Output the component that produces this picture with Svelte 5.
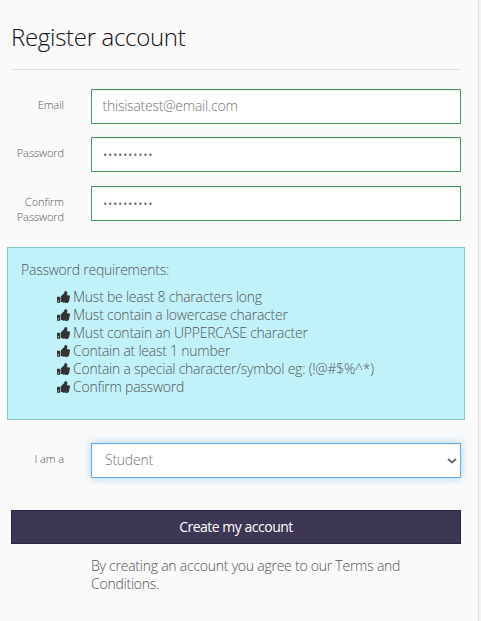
<script lang="ts">
	let email = $state('thisisatest@email.com');
	let password = $state('Passw0rd!1');
	let confirmPassword = $state('Passw0rd!1');
	let role = $state('Student');

	const requirements = [
		'Must be least 8 characters long',
		'Must contain a lowercase character',
		'Must contain an UPPERCASE character',
		'Contain at least 1 number',
		'Contain a special character/symbol eg: (!@#$%^*)',
		'Confirm password'
	];
</script>

<main class="panel">
	<h1>Register account</h1>
	<form onsubmit={(e) => e.preventDefault()}>
		<div class="form-group">
			<label for="email">Email</label>
			<input id="email" type="email" class="form-control valid" bind:value={email} />
		</div>
		<div class="form-group">
			<label for="password">Password</label>
			<input id="password" type="password" class="form-control valid" bind:value={password} />
		</div>
		<div class="form-group confirm">
			<label for="confirm">Confirm Password</label>
			<input id="confirm" type="password" class="form-control valid" bind:value={confirmPassword} />
		</div>

		<div class="requirements">
			<p>Password requirements:</p>
			<ul>
				{#each requirements as requirement}
					<li>
						<svg class="thumb" viewBox="0 0 13 12" aria-hidden="true">
							<path
								fill-rule="evenodd"
								d="M.5 5.800h2.200q.5 0 .5.5v4.900q0 .5-.5.5H.5q-.5 0-.5-.5V6.300q0-.5.5-.5zM.8 9.300v1.200h1V9.300z"
							/>
							<path
								d="M3.800 6q0-.5.4-.9L7 2.200C7.500 1.600 7.600.1 8.500.1c1.300 0 1.800.9 1.800 1.900 0 .8-.3 1.500-.5 2.200h1.900c.8 0 1.300.6 1.300 1.300 0 .5-.1.900-.4 1.200.2.6.1 1.200-.3 1.700.1.600 0 1.200-.4 1.600 0 1.300-.7 1.900-2.200 1.900-2.300 0-3.700-.4-5.500-.9q-.4-.1-.4-.6z"
							/>
						</svg>
						<span>{requirement}</span>
					</li>
				{/each}
			</ul>
		</div>

		<div class="form-group role">
			<label for="role">I am a</label>
			<div class="select-wrap">
				<select id="role" class="form-control" bind:value={role}>
					<option>Student</option>
					<option>Teacher</option>
				</select>
				<svg class="chevron" viewBox="0 0 10 6" aria-hidden="true">
					<path d="M1 1l4 3.500 4-3.500" />
				</svg>
			</div>
		</div>

		<button type="submit">Create my account</button>
		<p class="terms">By creating an account you agree to our Terms and Conditions.</p>
	</form>
</main>

<style>
	:global(body) {
		margin: 0;
		background: #f5f5f5;
	}

	.panel {
		box-sizing: border-box;
		width: 479px;
		height: 621px;
		padding: 20px 17px 0 11px;
		border-right: 1px solid #e3e3e3;
		background: #fafafa;
		color: #555;
		font-family: 'Open Sans', sans-serif;
		font-size: 14px;
		font-weight: 300;
		letter-spacing: -0.24px;
		line-height: 18px;
		overflow: hidden;
	}

	h1 {
		margin: 0 0 19px;
		padding-bottom: 16px;
		border-bottom: 1px solid #ddd;
		color: #111;
		font-size: 24px;
		font-weight: 300;
		letter-spacing: -0.3px;
		line-height: 33px;
	}

	.form-group {
		display: grid;
		grid-template-columns: 53px 370px;
		column-gap: 27px;
		align-items: start;
		height: 35px;
		margin-bottom: 13px;
	}

	.form-group.confirm {
		margin-top: 14px;
		margin-bottom: 26px;
	}

	label {
		padding-top: 8px;
		font-size: 11px;
		letter-spacing: -0.06px;
		line-height: 15px;
		text-align: right;
	}

	.form-control {
		box-sizing: border-box;
		width: 100%;
		height: 35px;
		margin: 0;
		padding: 5px 10.5px 7px;
		border: 1px solid #439a62;
		border-radius: 0;
		outline: none;
		background: #fff;
		box-shadow: inset 0 1px 1px rgba(0, 0, 0, 0.075);
		color: #777;
		font: inherit;
		letter-spacing: inherit;
	}

	.form-control[type='password'] {
		padding: 6px 10.5px;
		color: #666;
	}

	.requirements {
		box-sizing: border-box;
		height: 173px;
		margin: 0 -4px 23px;
		padding: 13px;
		border: 1px solid #80c9c8;
		background: #c1f2f9;
	}

	.requirements p {
		margin: 0 0 9px;
	}

	ul {
		margin: 0;
		padding-left: 36px;
		list-style: none;
	}

	li {
		display: flex;
		align-items: center;
		gap: 3px;
	}

	.thumb {
		width: 13px;
		height: 12px;
		fill: #333;
	}

	.select-wrap {
		position: relative;
	}

	select.form-control {
		padding-left: 13px;
		appearance: none;
		border-color: #66afe9;
		box-shadow:
			inset 0 1px 1px rgba(0, 0, 0, 0.075),
			0 0 8px rgba(102, 175, 233, 0.6);
	}

	.chevron {
		position: absolute;
		top: 14.500px;
		right: 4px;
		width: 10px;
		height: 6px;
		fill: none;
		stroke: #666;
		stroke-width: 1.9;
		pointer-events: none;
	}

	button {
		display: block;
		width: 450px;
		height: 34px;
		margin-top: 32px;
		padding: 0;
		border: 1px solid #2a2540;
		border-radius: 0;
		background: #3e3655;
		color: #fff;
		font: inherit;
		font-weight: 400;
		letter-spacing: -0.49px;
	}

	.terms {
		margin: 13px 0 0 80px;
		width: 330px;
	}
</style>
